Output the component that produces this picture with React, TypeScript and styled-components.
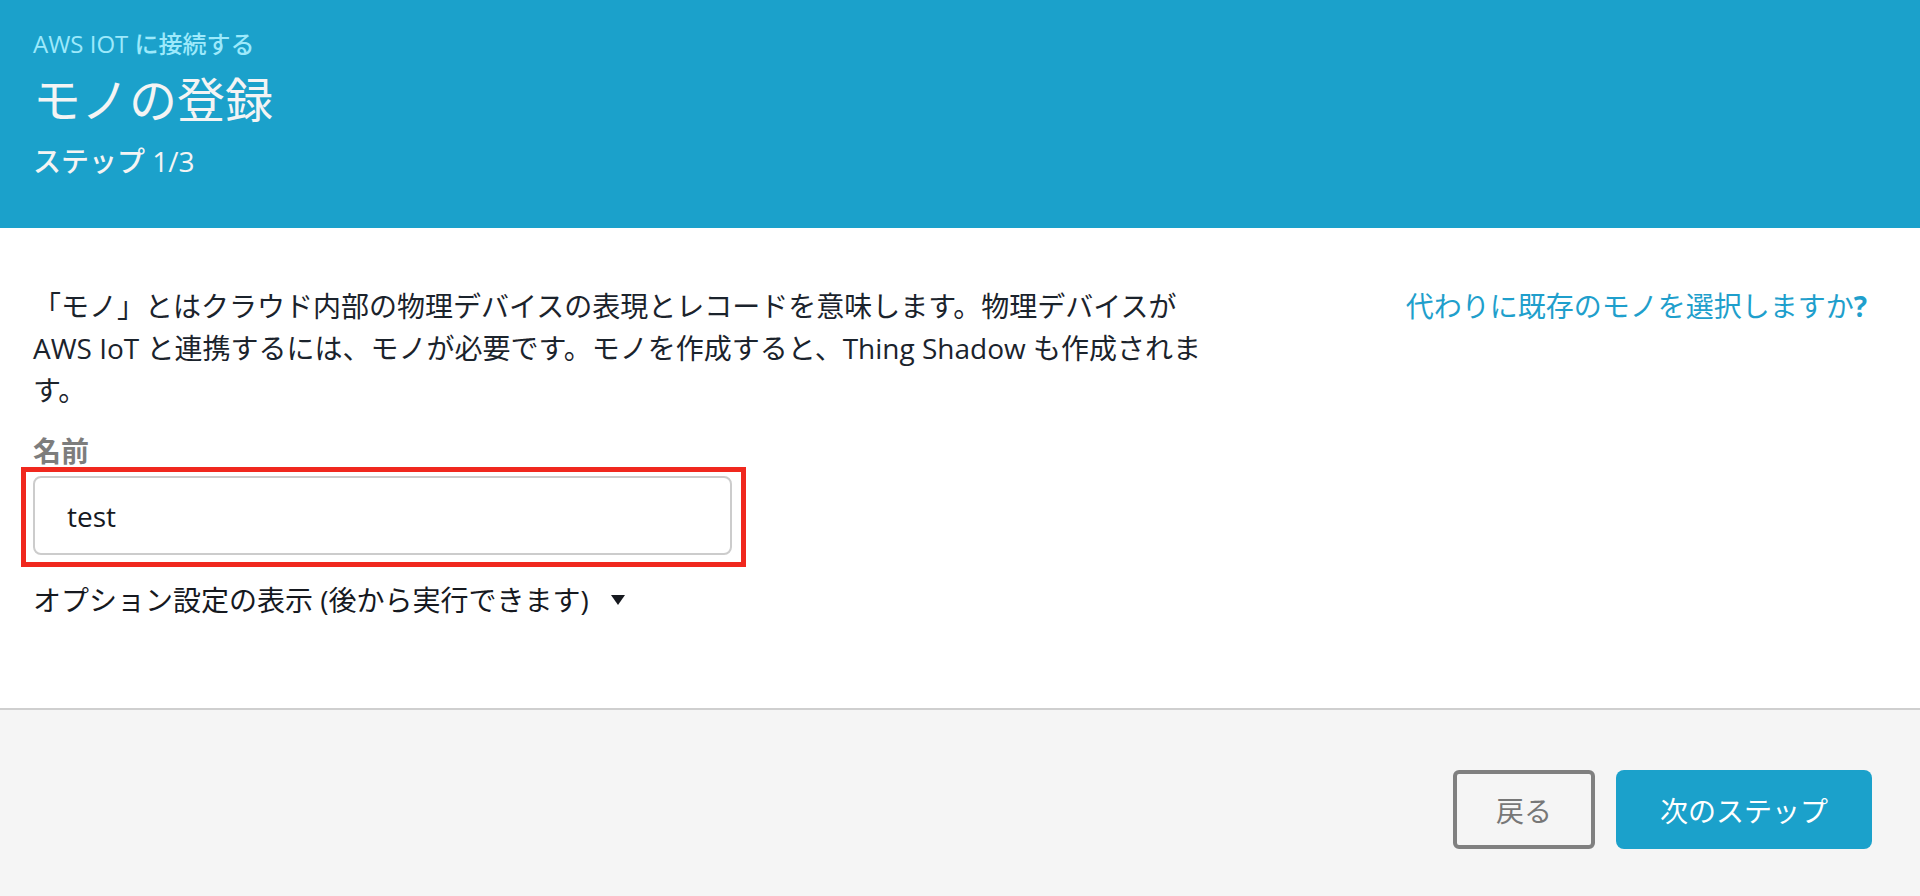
import React from 'react';
import styled, { createGlobalStyle } from 'styled-components';

const GlobalStyle = createGlobalStyle`
  html, body {
    margin: 0;
    padding: 0;
    background: #ffffff;
  }
  body {
    font-family: 'Open Sans', 'Noto Sans CJK JP', sans-serif;
    color: #16191f;
  }
`;

const Page = styled.div`
  display: flex;
  flex-direction: column;
  height: 896px;
  width: 1920px;
  overflow: hidden;
`;

const Header = styled.header`
  height: 228px;
  box-sizing: border-box;
  padding: 28px 33px 0;
  background: #1ba1cb;
`;

const Eyebrow = styled.div`
  font-size: 24px;
  line-height: 32px;
  font-weight: 500;
  color: #9de9fb;
`;

const Title = styled.h1`
  margin: 9px 0 0;
  font-size: 48px;
  line-height: 62px;
  font-weight: 400;
  color: #f4f4f4;
`;

const Step = styled.div`
  margin-top: 12px;
  font-size: 28px;
  line-height: 36px;
  font-weight: 500;
  color: #f4f4f4;
`;

const Body = styled.main`
  flex: 1;
  display: flex;
  justify-content: space-between;
  align-items: flex-start;
  padding: 57px 53px 0 33px;
`;

const Form = styled.div`
  width: 1180px;
`;

const Intro = styled.p`
  margin: 0;
  font-size: 28px;
  line-height: 42px;
  color: #1b232c;
`;

const Label = styled.label`
  display: block;
  margin-top: 22px;
  font-size: 28px;
  line-height: 36px;
  font-weight: 700;
  color: #7d7d7d;
`;

const Field = styled.div`
  position: relative;
  width: 699px;
  margin-top: 7px;
`;

const Highlight = styled.div`
  position: absolute;
  top: -9px;
  left: -12px;
  right: -14px;
  bottom: -12px;
  border: 5px solid #f0281e;
  pointer-events: none;
`;

const TextInput = styled.input`
  display: block;
  width: 100%;
  height: 79px;
  box-sizing: border-box;
  padding: 0 32px;
  border: 2px solid #cccccc;
  border-radius: 8px;
  background: #ffffff;
  font-family: inherit;
  font-size: 28px;
  font-weight: 500;
  color: #16191f;
  outline: none;
`;

const Toggle = styled.button`
  display: flex;
  align-items: center;
  gap: 22px;
  margin-top: 24px;
  padding: 0;
  border: none;
  background: none;
  font-family: inherit;
  font-size: 28px;
  line-height: 42px;
  font-weight: 400;
  color: #16191f;
  cursor: pointer;
`;

const Caret = styled.span`
  width: 0;
  height: 0;
  border-left: 7px solid transparent;
  border-right: 7px solid transparent;
  border-top: 10px solid #16191f;
`;

const ExistingLink = styled.a`
  font-size: 28px;
  line-height: 42px;
  color: #1f9fcc;
  text-decoration: none;
  white-space: nowrap;

  b {
    font-weight: 700;
  }
`;

const Footer = styled.footer`
  height: 188px;
  box-sizing: border-box;
  display: flex;
  justify-content: flex-end;
  align-items: flex-start;
  gap: 21px;
  padding: 60px 48px 0 0;
  border-top: 2px solid #cfcfcf;
  background: #f5f5f5;
`;

const Button = styled.button<{ $primary?: boolean }>`
  height: 79px;
  box-sizing: border-box;
  padding: 0;
  font-family: inherit;
  font-size: 28px;
  cursor: pointer;
  border-radius: ${(p) => (p.$primary ? '8px' : '6px')};
  border: ${(p) => (p.$primary ? 'none' : '4px solid #808080')};
  background: ${(p) => (p.$primary ? '#1ba1cb' : 'transparent')};
  color: ${(p) => (p.$primary ? '#ffffff' : '#777777')};
  width: ${(p) => (p.$primary ? '256px' : '142px')};
`;

export default function App() {
  return (
    <Page>
      <GlobalStyle />
      <Header>
        <Eyebrow>AWS IOT に接続する</Eyebrow>
        <Title>モノの登録</Title>
        <Step>ステップ 1/3</Step>
      </Header>
      <Body>
        <Form>
          <Intro>
            「モノ」とはクラウド内部の物理デバイスの表現とレコードを意味します。物理デバイスが
            AWS IoT と連携するには、モノが必要です。モノを作成すると、Thing Shadow も作成されます。
          </Intro>
          <Label htmlFor="thing-name">名前</Label>
          <Field>
            <TextInput id="thing-name" defaultValue="test" />
            <Highlight />
          </Field>
          <Toggle type="button">
            オプション設定の表示 (後から実行できます)
            <Caret />
          </Toggle>
        </Form>
        <ExistingLink href="#">
          代わりに既存のモノを選択しますか<b>?</b>
        </ExistingLink>
      </Body>
      <Footer>
        <Button type="button">戻る</Button>
        <Button type="button" $primary>
          次のステップ
        </Button>
      </Footer>
    </Page>
  );
}
